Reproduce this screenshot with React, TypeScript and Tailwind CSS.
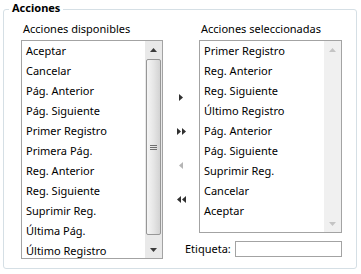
import React from "react";

const left = [
  "Aceptar",
  "Cancelar",
  "Pág. Anterior",
  "Pág. Siguiente",
  "Primer Registro",
  "Primera Pág.",
  "Reg. Anterior",
  "Reg. Siguiente",
  "Suprimir Reg.",
  "Última Pág.",
  "Último Registro",
];

const right = [
  "Primer Registro",
  "Reg. Anterior",
  "Reg. Siguiente",
  "Último Registro",
  "Pág. Anterior",
  "Pág. Siguiente",
  "Suprimir Reg.",
  "Cancelar",
  "Aceptar",
];

function Tri({ dir, color }: { dir: "up" | "down" | "left" | "right"; color: string }) {
  if (dir === "up")
    return (
      <svg width="7" height="4" viewBox="0 0 7 4">
        <path d="M0 4 L3.5 0 L7 4Z" fill={color} />
      </svg>
    );
  if (dir === "down")
    return (
      <svg width="7" height="4" viewBox="0 0 7 4">
        <path d="M0 0 L3.5 4 L7 0Z" fill={color} />
      </svg>
    );
  if (dir === "right")
    return (
      <svg width="4" height="7" viewBox="0 0 4 7">
        <path d="M0 0 L4 3.5 L0 7Z" fill={color} />
      </svg>
    );
  return (
    <svg width="4" height="7" viewBox="0 0 4 7">
      <path d="M4 0 L0 3.5 L4 7Z" fill={color} />
    </svg>
  );
}

function ScrollBar({ disabled }: { disabled?: boolean }) {
  const c = disabled ? "#c4c4c4" : "#3c3c3c";
  return (
    <div
      className={
        disabled
          ? "flex w-[17px] flex-col bg-[#f0f0f0]"
          : "flex w-[17px] flex-col bg-[#e9e9e9]"
      }
    >
      <div className="flex h-[17px] items-center justify-center">
        <Tri dir="up" color={c} />
      </div>
      <div className="flex-1">
        {!disabled && (
          <div className="mx-[1px] mt-[1px] flex h-[176px] w-[15px] items-center justify-center rounded-[2px] border border-[#979797] bg-linear-to-r from-[#f5f5f5] via-[#e6e6e6] to-[#d3d3d3]">
            <div className="flex flex-col gap-[1px]">
              <div className="h-[1px] w-[7px] bg-[#6f6f6f]" />
              <div className="h-[1px] w-[7px] bg-[#6f6f6f]" />
              <div className="h-[1px] w-[7px] bg-[#6f6f6f]" />
            </div>
          </div>
        )}
      </div>
      <div className="flex h-[17px] items-center justify-center">
        <Tri dir="down" color={c} />
      </div>
    </div>
  );
}

function ListBox({ items, w, h, disabled }: { items: string[]; w: string; h: string; disabled?: boolean }) {
  return (
    <div className={`flex border border-[#a3a3a3] bg-white ${w} ${h}`}>
      <div className="flex-1 overflow-hidden">
        {items.map((t) => (
          <div key={t} className="h-[20px] whitespace-nowrap pl-[4px] text-[11px] leading-[20px] text-black">
            {t}
          </div>
        ))}
      </div>
      <ScrollBar disabled={disabled} />
    </div>
  );
}

export default function App() {
  return (
    <div className="h-[274px] w-[361px] bg-white pl-[3px] pt-[9px] font-['Noto_Sans',sans-serif] text-black">
      <div className="relative h-[260px] w-[354px] rounded-[3px] border border-[#d5dfe5]">
        <div className="absolute left-[5px] top-[-10px] bg-white px-[3px] text-[11px] font-bold leading-[16px]">
          Acciones
        </div>
        <div className="flex pl-[17px] pt-[11px]">
          <div className="flex flex-col">
            <div className="mb-[3px] pl-[2px] text-[11px] leading-[16px]">Acciones disponibles</div>
            <ListBox items={left} w="w-[142px]" h="h-[219px]" />
          </div>
          <div className="flex w-[36px] flex-col items-center">
            <div className="mt-[64px] flex flex-col gap-[10px]">
              <div className="flex h-[24px] w-[24px] items-center justify-center">
                <Tri dir="right" color="#303030" />
              </div>
              <div className="flex h-[24px] w-[24px] items-center justify-center gap-[1px]">
                <Tri dir="right" color="#303030" />
                <Tri dir="right" color="#303030" />
              </div>
              <div className="flex h-[24px] w-[24px] items-center justify-center">
                <Tri dir="left" color="#b5b5b5" />
              </div>
              <div className="flex h-[24px] w-[24px] items-center justify-center gap-[1px]">
                <Tri dir="left" color="#303030" />
                <Tri dir="left" color="#303030" />
              </div>
            </div>
          </div>
          <div className="flex flex-col">
            <div className="mb-[3px] pl-[2px] text-[11px] leading-[16px]">Acciones seleccionadas</div>
            <ListBox items={right} w="w-[143px]" h="h-[193px]" disabled />
            <div className="-ml-[14px] mt-[8px] flex w-[157px] items-center justify-between">
              <span className="text-[11px] leading-[16px]">Etiqueta:</span>
              <div className="h-[16px] w-[107px] border border-[#a3a3a3] bg-white" />
            </div>
          </div>
        </div>
      </div>
    </div>
  );
}
